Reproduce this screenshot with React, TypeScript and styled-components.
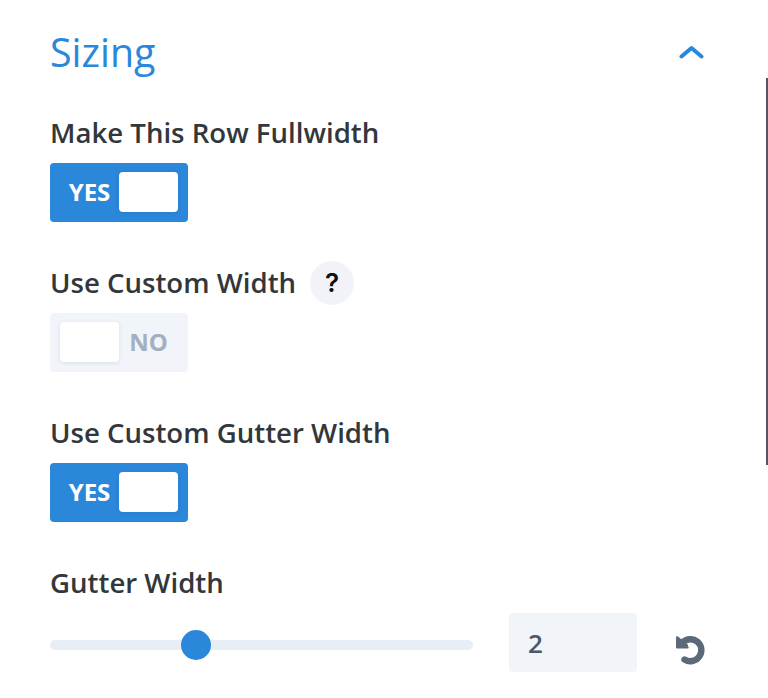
import React from "react";
import styled, { createGlobalStyle } from "styled-components";

const GlobalStyle = createGlobalStyle`
  * { box-sizing: border-box; }
  body { margin: 0; background: #fff; overflow: hidden; font-family: "Open Sans", sans-serif; }
`;

const Panel = styled.main`
  position: relative;
  height: 698px;
  padding: 25px 50px 0;
  overflow: hidden;
`;

const Header = styled.header`
  display: flex;
  justify-content: space-between;
  height: 86px;
  color: #2b87da;
`;

const Title = styled.h1`
  margin: 0;
  font-size: 39.4px;
  font-weight: 400;
  line-height: 54px;
`;

const Chevron = styled.svg`
  width: 26px;
  height: 16px;
  margin: 19px 14px 0 0;
`;

const Field = styled.section`
  height: 150px;
`;

const LabelRow = styled.div`
  display: flex;
  align-items: center;
  gap: 14px;
  height: 44px;
  margin-bottom: 8px;
`;

const Label = styled.span`
  padding-bottom: 2px;
  font-size: 27.6px;
  font-weight: 600;
  line-height: 42px;
  color: #32373c;
  white-space: nowrap;
`;

const Help = styled.button`
  width: 44px;
  height: 44px;
  padding: 0;
  border: 0;
  border-radius: 50%;
  background: #f1f3f9;
  color: #111;
  font: 600 26px/44px Inter, sans-serif;
`;

const Switch = styled.button<{ $on: boolean }>`
  display: flex;
  flex-direction: ${(p) => (p.$on ? "row" : "row-reverse")};
  align-items: center;
  width: 138px;
  height: 59px;
  padding: 0 10px 2px;
  border: 0;
  border-radius: 4px;
  background: ${(p) => (p.$on ? "#2b87da" : "#f1f4f9")};
  color: ${(p) => (p.$on ? "#fff" : "#a2b0c1")};
  font: 700 24px/57px "Open Sans", sans-serif;
`;

const SwitchText = styled.span`
  flex: 1;
  text-align: center;
`;

const Knob = styled.span`
  width: 59px;
  height: 40px;
  border-radius: 4px;
  background: #fff;
  box-shadow: 0 1px 4px rgba(40, 60, 90, 0.12);
`;

const SliderRow = styled.div`
  display: flex;
  align-items: center;
  height: 58px;
`;

const Track = styled.div`
  display: flex;
  align-items: center;
  width: 423px;
  height: 10px;
  margin-top: 5px;
  padding-left: 131px;
  border-radius: 5px;
  background: #e7eef5;
`;

const Thumb = styled.span`
  width: 30px;
  height: 30px;
  border-radius: 50%;
  background: #2b87da;
`;

const ValueBox = styled.div`
  width: 128px;
  height: 59px;
  margin-left: 36px;
  padding-left: 19px;
  border-radius: 4px;
  background: #f1f4f9;
  color: #4c5866;
  font-size: 26px;
  font-weight: 600;
  line-height: 61px;
`;

const Reset = styled.svg`
  width: 32px;
  height: 32px;
  margin: 16px 0 0 37px;
`;

const Scrollbar = styled.div`
  position: absolute;
  top: 78px;
  right: 0;
  width: 2px;
  height: 387px;
  background: #50555f;
`;

const Toggle = ({ on }: { on: boolean }) => (
  <Switch $on={on} role="switch" aria-checked={on}>
    <SwitchText>{on ? "YES" : "NO"}</SwitchText>
    <Knob />
  </Switch>
);

const ToggleField = ({ label, on, help }: { label: string; on: boolean; help?: boolean }) => (
  <Field>
    <LabelRow>
      <Label>{label}</Label>
      {help && <Help>?</Help>}
    </LabelRow>
    <Toggle on={on} />
  </Field>
);

export default function App() {
  return (
    <>
      <GlobalStyle />
      <Panel>
        <Header>
          <Title>Sizing</Title>
          <Chevron viewBox="0 0 26 16" fill="none">
            <path d="M3.5 12.5 13.5 4 23.5 12.5" stroke="currentColor" strokeWidth="4" strokeLinecap="round" strokeLinejoin="round" />
          </Chevron>
        </Header>
        <ToggleField label="Make This Row Fullwidth" on />
        <ToggleField label="Use Custom Width" on={false} help />
        <ToggleField label="Use Custom Gutter Width" on />
        <Field>
          <LabelRow>
            <Label>Gutter Width</Label>
          </LabelRow>
          <SliderRow>
            <Track>
              <Thumb />
            </Track>
            <ValueBox>2</ValueBox>
            <Reset viewBox="0 0 32 32" fill="none">
              <path d="M8.5 8.5A11 11 0 1 1 10.5 25.5" stroke="#5c6978" strokeWidth="6.4" strokeLinecap="round" />
              <path d="M2.5 2.8V14H14.2L13.2 10.5 4 3Z" fill="#5c6978" stroke="#5c6978" strokeLinejoin="round" />
            </Reset>
          </SliderRow>
        </Field>
        <Scrollbar />
      </Panel>
    </>
  );
}
